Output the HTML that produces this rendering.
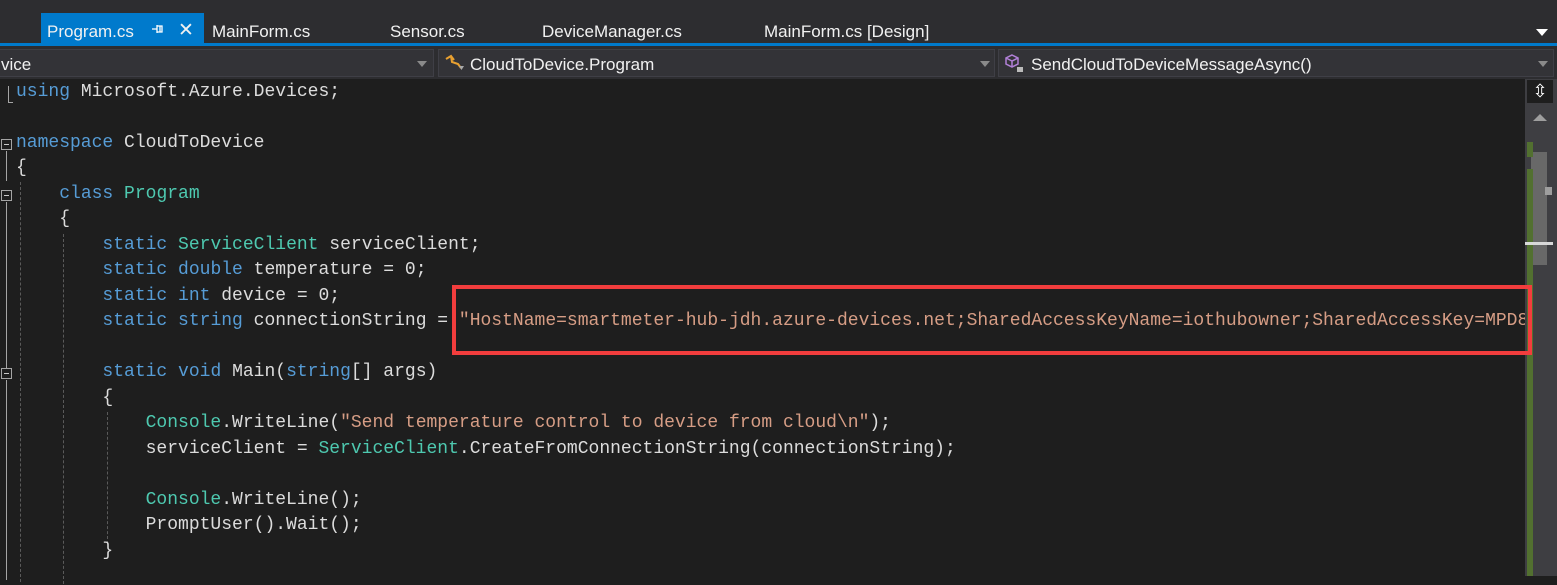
<!DOCTYPE html>
<html><head><meta charset="utf-8"><style>
*{margin:0;padding:0;box-sizing:border-box}
body{width:1557px;height:576px;background:#1e1e1e;overflow:hidden;position:relative;font-family:"Liberation Sans",sans-serif}
.tabs{position:absolute;left:0;top:0;width:1557px;height:43px;background:#2d2d30}
.tab{position:absolute;top:13px;height:30px;color:#f1f1f1;font-size:17px;line-height:30px;padding-top:4px;white-space:nowrap}
.blue{position:absolute;left:0;top:43px;width:1557px;height:3px;background:#007acc}
.bar{position:absolute;top:46px;height:33px;background:#2d2d30}
.dd{position:absolute;top:49px;height:28px;background:#333337;border:1px solid #3f3f46;color:#f1f1f1;font-size:17px;line-height:26px;padding-top:2px;white-space:nowrap}
.code{position:absolute;left:0;top:88px;width:1525px;height:497px}
.ln{position:absolute;left:16px;height:25px;font-family:"Liberation Mono",monospace;font-size:18px;line-height:25px;color:#dcdcdc;white-space:pre}
.k{color:#569cd6}.t{color:#4ec9b0}.s{color:#d69d85}
.fold{position:absolute;left:1px;width:11px;height:11px;border:1px solid #a5a5a5;background:#1e1e1e}
.fold:after{content:"";position:absolute;left:2px;top:4px;width:5px;height:1px;background:#c8c8c8}
.vl{position:absolute;width:1px;background:#a5a5a5}
.gd{position:absolute;width:0;border-left:1px dashed #5a5a5a}
.tri{position:absolute;width:0;height:0;border-left:5px solid transparent;border-right:5px solid transparent;border-top:6px solid #8a8a8a}
</style></head><body>
<div class="tabs">
  <div class="tab" style="left:41px;width:163px;background:#007acc;padding-left:6px">Program.cs<svg style="position:absolute;left:110px;top:10px" width="14" height="12"><path d="M1 6 H6 M6 2 V10 M6 3 H11 V9 H6 M9 3 V9" stroke="#fff" stroke-width="1.3" fill="none"/></svg><span style="position:absolute;left:137px;top:3px;font-size:19px">✕</span></div>
  <div class="tab" style="left:212px">MainForm.cs</div>
  <div class="tab" style="left:390px">Sensor.cs</div>
  <div class="tab" style="left:542px">DeviceManager.cs</div>
  <div class="tab" style="left:764px">MainForm.cs [Design]</div>
  <div class="tri" style="left:1536px;top:29px;border-left-width:6px;border-right-width:6px;border-top:7px solid #fff"></div>
</div>
<div class="blue"></div>
<div class="bar" style="left:0;width:1557px"></div>
<div class="dd" style="left:-2px;width:436px;padding-left:2px">vice<div class="tri" style="left:418px;top:11px"></div></div>
<div class="dd" style="left:438px;width:557px;padding-left:31px"><svg style="position:absolute;left:5px;top:3px" width="22" height="20"><path d="M2 6 L7 3 L10 7 M7 3 L8 9 L14 11 L17 15" fill="none" stroke="#e8a030" stroke-width="2"/><path d="M15 13 L20 13 L17.5 17 Z" fill="#aaa"/></svg>CloudToDevice.Program<div class="tri" style="left:541px;top:11px"></div></div>
<div class="dd" style="left:998px;width:556px;padding-left:32px"><svg style="position:absolute;left:6px;top:4px" width="20" height="20"><path d="M7 1 L13 4 L13 10 L7 13 L1 10 L1 4 Z M1 4 L7 7 L13 4 M7 7 L7 13" fill="none" stroke="#b180d7" stroke-width="1.5"/><rect x="12" y="13" width="6" height="5" fill="#bbb"/></svg>SendCloudToDeviceMessageAsync()<div class="tri" style="left:539px;top:11px"></div></div>
<div class="code">
<div class="vl" style="left:8px;top:-2px;height:17px"></div><div class="vl" style="left:8px;top:14px;width:5px;height:1px"></div>
<div class="fold" style="top:51px"></div><div class="vl" style="left:6px;top:63px;height:30px"></div>
<div class="fold" style="top:102px"></div><div class="vl" style="left:6px;top:114px;height:170px"></div>
<div class="fold" style="top:280px"></div><div class="vl" style="left:6px;top:292px;height:200px"></div>
<div class="gd" style="left:20px;top:94px;height:400px"></div>
<div class="gd" style="left:63px;top:146px;height:350px"></div>
<div class="gd" style="left:107px;top:324px;height:132px"></div>
<div class="ln" style="top:-8px"><span class="k">using</span> Microsoft.Azure.Devices;</div>
<div class="ln" style="top:43px"><span class="k">namespace</span> CloudToDevice</div>
<div class="ln" style="top:68px">{</div>
<div class="ln" style="top:94px">    <span class="k">class</span> <span class="t">Program</span></div>
<div class="ln" style="top:119px">    {</div>
<div class="ln" style="top:145px">        <span class="k">static</span> <span class="t">ServiceClient</span> serviceClient;</div>
<div class="ln" style="top:170px">        <span class="k">static</span> <span class="k">double</span> temperature = 0;</div>
<div class="ln" style="top:196px">        <span class="k">static</span> <span class="k">int</span> device = 0;</div>
<div class="ln" style="top:221px">        <span class="k">static</span> <span class="k">string</span> connectionString = <span class="s">"HostName=smartmeter-hub-jdh.azure-devices.net;SharedAccessKeyName=iothubowner;SharedAccessKey=MPD8</span></div>
<div class="ln" style="top:272px">        <span class="k">static</span> <span class="k">void</span> Main(<span class="k">string</span>[] args)</div>
<div class="ln" style="top:298px">        {</div>
<div class="ln" style="top:323px">            <span class="t">Console</span>.WriteLine(<span class="s">"Send temperature control to device from cloud\n"</span>);</div>
<div class="ln" style="top:349px">            serviceClient = <span class="t">ServiceClient</span>.CreateFromConnectionString(connectionString);</div>
<div class="ln" style="top:400px">            <span class="t">Console</span>.WriteLine();</div>
<div class="ln" style="top:425px">            PromptUser().Wait();</div>
<div class="ln" style="top:451px">        }</div>
</div>
<div style="position:absolute;left:0;top:79px;width:1525px;height:3px;background:#1e1e1e"></div>
<div style="position:absolute;left:1525px;top:79px;width:32px;height:497px;background:#3e3e42"></div>
<div style="position:absolute;left:1527px;top:80px;width:26px;height:23px;background:#1e1e1e;color:#fff;font-size:18px;line-height:22px;text-align:center">⇳</div>
<div class="tri" style="left:1533px;top:114px;border-left-width:7px;border-right-width:7px;border-top:0;border-bottom:7px solid #9e9e9e"></div>
<div style="position:absolute;left:1531px;top:152px;width:16px;height:113px;background:#686868"></div>
<div style="position:absolute;left:1527px;top:142px;width:6px;height:15px;background:#527030"></div>
<div style="position:absolute;left:1527px;top:169px;width:6px;height:407px;background:#527030"></div>
<div style="position:absolute;left:1545px;top:187px;width:7px;height:8px;background:#9e9e9e"></div>
<div style="position:absolute;left:1525px;top:242px;width:28px;height:3px;background:#d8d8d8"></div>
<div style="position:absolute;left:452px;top:285px;width:1080px;height:70px;border:4px solid #f23d3d"></div>
</body></html>
